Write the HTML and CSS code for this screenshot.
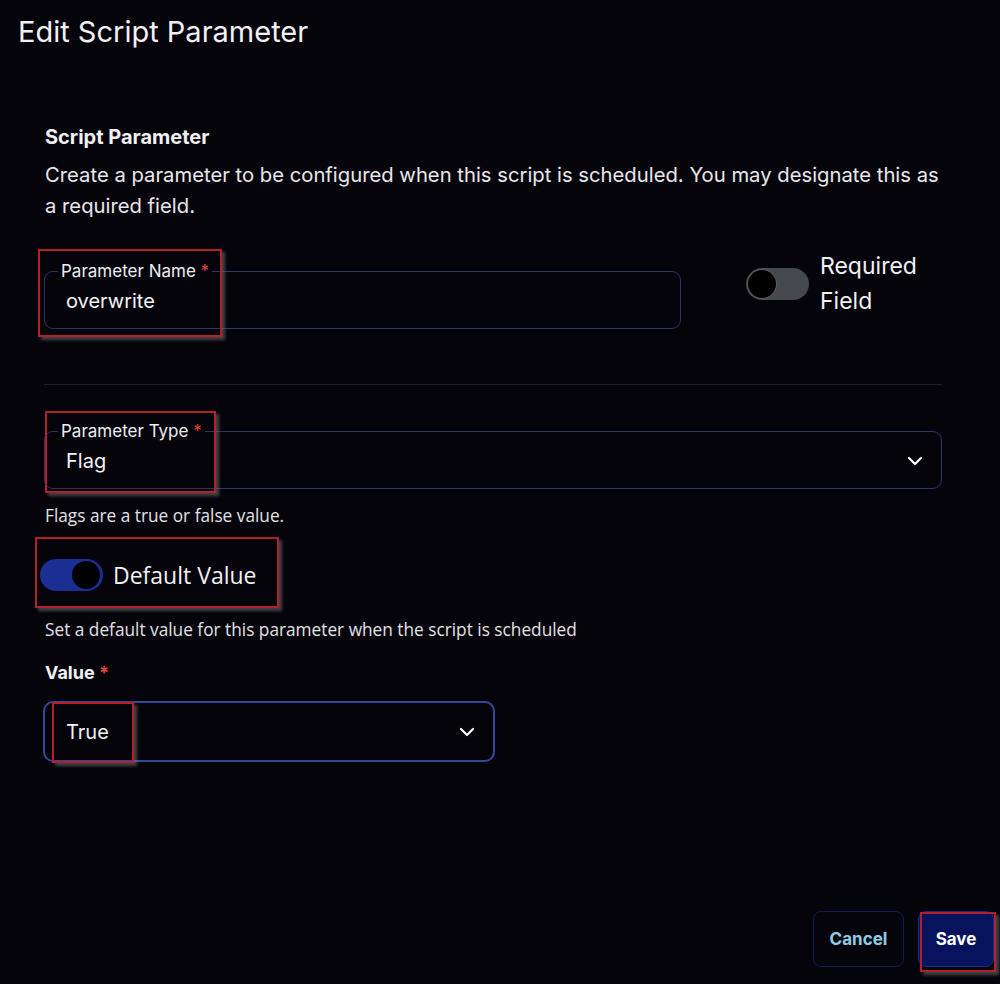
FILE: index.html
```html
<!DOCTYPE html>
<html>

<head>
    <meta charset="UTF-8">
    <title>Edit Script Parameter</title>
    <link rel="stylesheet" href="styles.css">
</head>

<body>
    <div class='page'>
        <h1 class='title'>Edit Script Parameter</h1>

        <div class='content'>
            <h2 class='section-title'>Script Parameter</h2>
            <p class='section-desc'>Create a parameter to be configured when this script is scheduled. You may designate this as a required field.</p>

            <div class='name-row'>
                <fieldset class='field name-field'>
                    <legend>Parameter Name <span class='req'>*</span></legend>
                    <div class='field-value'>overwrite</div>
                </fieldset>
                <div class='required-group'>
                    <div class='switch off'><span class='knob'></span></div>
                    <div class='switch-label'>Required<br>Field</div>
                </div>
            </div>

            <div class='divider'></div>

            <fieldset class='field type-field'>
                <legend>Parameter Type <span class='req'>*</span></legend>
                <div class='field-value select-value'>
                    <span>Flag</span>
                    <svg class='chevron' width='16' height='10' viewBox='0 0 16 10'>
                        <path d='M2 2 L8 8 L14 2' fill='none' stroke='#fff' stroke-width='2.2' stroke-linecap='round' stroke-linejoin='round' />
                    </svg>
                </div>
            </fieldset>
            <p class='hint'>Flags are a true or false value.</p>

            <div class='default-row'>
                <div class='switch on'><span class='knob'></span></div>
                <div class='default-label'>Default Value</div>
            </div>
            <p class='hint hint-default'>Set a default value for this parameter when the script is scheduled</p>

            <div class='value-label'>Value <span class='req'>*</span></div>
            <div class='value-select'>
                <span>True</span>
                <svg class='chevron' width='16' height='10' viewBox='0 0 16 10'>
                    <path d='M2 2 L8 8 L14 2' fill='none' stroke='#fff' stroke-width='2.2' stroke-linecap='round' stroke-linejoin='round' />
                </svg>
            </div>
        </div>

        <div class='footer'>
            <button class='btn btn-cancel'>Cancel</button>
            <button class='btn btn-save'>Save</button>
        </div>

        <!-- red annotation boxes drawn on top of the screenshot -->
        <span class='mark' style='left:38px;top:249px;width:184px;height:88px'></span>
        <span class='mark' style='left:45px;top:411px;width:171px;height:82px'></span>
        <span class='mark' style='left:35px;top:537px;width:244px;height:71px'></span>
        <span class='mark' style='left:52px;top:702px;width:82px;height:61px'></span>
        <span class='mark' style='left:920px;top:912px;width:76px;height:60px'></span>
    </div>
</body>

</html>
```

FILE: styles.css
```css
html,
body {
    padding: 0;
    margin: 0;
    background: #05040b;
    color: #f1f1f4;
    font-family: Inter, "Noto Sans", sans-serif;
}

.page {
    position: relative;
    width: 1000px;
    height: 984px;
    overflow: hidden;
}

.title {
    margin: 0;
    padding: 15px 0 0 18px;
    font-size: 29px;
    line-height: 34px;
    font-weight: 400;
}

.content {
    width: 897px;
    padding-left: 45px;
}

.section-title {
    margin: 76px 0 0;
    font-size: 20px;
    line-height: 24px;
    font-weight: 700;
}

.section-desc {
    margin: 10px 0 0;
    font-size: 20.25px;
    line-height: 31px;
    color: #e8e8ec;
}

.req {
    color: #e0443c;
}

/* outlined inputs */
.field {
    margin: 0;
    padding: 0 0 0 13px;
    border: 1px solid #2c3563;
    border-radius: 9px;
    min-width: 0;
}

.field legend {
    padding: 0 3px;
    font-size: 17px;
    line-height: 20px;
    color: #eeeef2;
}

.field-value {
    padding: 8px 0 15px 8px;
    font-size: 20px;
    line-height: 24px;
    color: #f4f4f6;
}

.select-value {
    display: flex;
    align-items: center;
    justify-content: space-between;
    padding-right: 18px;
}

.name-row {
    display: flex;
    align-items: flex-start;
    margin-top: 40px;
    margin-left: -1px;
}

.name-field {
    width: 622px;
}

.required-group {
    display: flex;
    align-items: center;
    margin: -12px 0 0 65px;
}

.switch {
    position: relative;
    width: 63px;
    height: 32px;
    border-radius: 16px;
}

.switch.off {
    background: #45494e;
}

.switch.on {
    background: #1b2e94;
}

.knob {
    position: absolute;
    top: 2px;
    width: 28px;
    height: 28px;
    border-radius: 50%;
    background: #000;
}

.switch.off .knob {
    left: 2px;
    box-shadow: 0 0 0 1px #5a5e63;
}

.switch.on .knob {
    right: 3px;
}

.switch-label {
    margin-left: 11px;
    font-size: 23px;
    line-height: 35px;
}

.divider {
    height: 1px;
    margin: 55px 0 0 -1px;
    background: #1f1e2a;
}

.type-field {
    margin: 36px 0 0 -1px;
}

.hint {
    margin: 16px 0 0;
    font-family: "Open Sans", sans-serif;
    font-size: 17.25px;
    line-height: 22px;
    color: #e2e2e6;
}

.default-row {
    display: flex;
    align-items: center;
    margin: 32px 0 0 -5px;
}

.default-label {
    margin-left: 10px;
    font-family: "Open Sans", sans-serif;
    font-size: 23px;
    line-height: 32px;
}

.hint-default {
    margin-top: 28px;
}

.value-label {
    margin-top: 20px;
    font-size: 18px;
    line-height: 24px;
    font-weight: 700;
}

.value-select {
    display: flex;
    align-items: center;
    justify-content: space-between;
    box-sizing: border-box;
    width: 452px;
    height: 61px;
    margin: 16px 0 0 -2px;
    padding: 0 18px 0 21px;
    border: 2px solid #34489a;
    border-radius: 10px;
    font-size: 20px;
}

.footer {
    display: flex;
    justify-content: flex-end;
    gap: 14px;
    margin-top: 149px;
    padding-right: 6px;
}

.btn {
    height: 56px;
    border-radius: 8px;
    font-family: Inter, sans-serif;
    font-size: 17px;
    font-weight: 700;
    cursor: pointer;
}

.btn-cancel {
    width: 91px;
    background: transparent;
    border: 1px solid #151a5c;
    color: #8fcde6;
}

.btn-save {
    width: 76px;
    background: #08135e;
    border: 1px solid #1c2a8a;
    color: #ffffff;
}

.mark {
    position: absolute;
    box-sizing: border-box;
    border: 2px solid #b3202c;
    box-shadow: 3px 3px 3px rgba(120, 120, 120, 0.55);
    pointer-events: none;
}
```
